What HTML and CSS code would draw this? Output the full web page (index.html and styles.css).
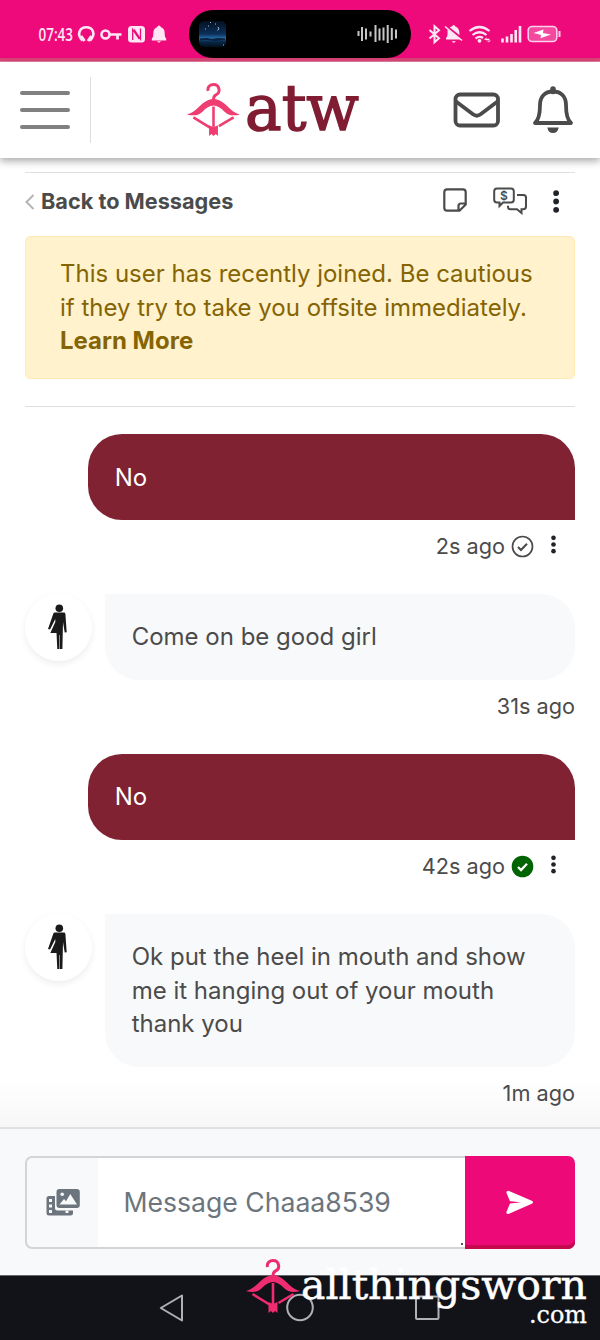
FILE: index.html
```html
<!DOCTYPE html>
<html lang="en">
<head>
<meta charset="utf-8">
<title>Messages</title>
<link rel="stylesheet" href="styles.css">
</head>
<body>
<svg class="defs" width="0" height="0">
  <symbol id="hanger" viewBox="0 0 54 56">
    <path d="M21.500 10C20.500 5.500 24 3.500 27 3.500c6.500 0 7.500 8.500 2.500 10.500-2 .8-2.500 2-2.500 5" fill="none" stroke="currentColor" stroke-width="3"/>
    <path d="M0 34C12 31 14 19.500 27 18c13 1.500 15 13 27 16-7 2-12 1-16-3-3.500-3.500-7-6-11-6S19.500 27.500 16 31c-4 4-9 5-16 3z" fill="currentColor"/>
    <path d="M27 26v21M6.500 37l17 10.500M47.500 37l-15 9" fill="none" stroke="currentColor" stroke-width="2.600"/>
    <path d="M22.500 45l4.500 2 4.500-2v11l-2.300-2-2.200 2-2.200-2-2.300 2z" fill="currentColor"/>
  </symbol>
  <symbol id="person" viewBox="0 0 20 46">
    <circle cx="11.300" cy="4.200" r="3.800"/>
    <path d="M6.800 8.600h9.200q1.200 0 1.400 1.400l1.300 18.200-2 .2L15 18l-.6 27h-2.600V31h-.5v14H9.300L8.500 29H2.300l5-11v-3L2 25.600 0 25 5.300 9.800q.4-1.200 1.500-1.200z"/>
  </symbol>
  <symbol id="dots" viewBox="0 0 6 22">
    <circle cx="3" cy="3" r="2.800"/><circle cx="3" cy="11" r="2.800"/><circle cx="3" cy="19" r="2.800"/>
  </symbol>
</svg>

<div class="status">
  <svg class="status-icons" width="600" height="62" viewBox="0 0 600 62">
    <text class="clock" x="38.500" y="41" textLength="34.500" lengthAdjust="spacingAndGlyphs">07:43</text>
    <g fill="none" stroke="#ffe6f4" stroke-width="2.600">
      <path d="M82.500 40.500C76 34 80 27.300 86.300 27.300S96.500 34 90 40.500"/>
      <path d="M81 36l3.500 5M91.500 36L88 41" stroke-width="3"/>
      <circle cx="105.500" cy="34.500" r="4"/><path d="M110 34.500h11.500M117.500 34.500v5" stroke-width="2.700"/>
    </g>
    <rect x="128" y="26" width="17" height="16.500" rx="3.500" fill="#ffe6f4"/>
    <path d="M132.700 40V29.500l6.500 9.500M140.500 28.500V39l-6.300-9.500" fill="none" stroke="#ef0a7b" stroke-width="1.300"/>
    <path d="M159 25.500q1.500 0 1.700 1.600 4 1.300 4 6.400 0 4 1.500 5v2h-14.400v-2q1.500-1 1.500-5 0-5.100 4-6.400.2-1.600 1.700-1.600zM156.800 41.200h4.400l-2.200 1.500z" fill="#ffe6f4"/>
    <rect x="189" y="10" width="222" height="48" rx="24" fill="#000"/>
    <linearGradient id="night" x2="0" y2="1"><stop offset="0" stop-color="#04101f"/><stop offset=".5" stop-color="#0c2f59"/><stop offset=".66" stop-color="#256aa5"/><stop offset=".8" stop-color="#082749"/><stop offset="1" stop-color="#02101d"/></linearGradient>
    <rect x="199" y="21" width="27" height="26" rx="5" fill="url(#night)"/>
    <path d="M218 27q2 2-.5 3.500M210 22.500h1M208 26h1M215 24h1M223 45h1M205 29h1" stroke="#9cbfe0" fill="none"/>
    <path d="M200 38.500l7-.5 5 1 6-1 7 .5v1.500l-10 1-9-1-6 .5z" fill="#0b213c"/>
    <path d="M358.500 31v5M362 27v14M366 28.500v11M370.500 31.500v5M375.500 25v17M379.500 28.500v12M383.500 27.500v13M387.700 25v18M391.800 28v12M396 29.500v9" stroke="#c7c7c7" stroke-width="2"/>
    <g fill="none" stroke="#ffe6f4">
      <path d="M429.500 30l9.500 8.200-4.500 4v-16l4.500 4-9.500 8.300" stroke-width="2"/>
      <path d="M445 26.500l17 14" stroke-width="1.500"/>
    </g>
    <path d="M449.800 27.500q1.300-.8 2.200-1 .5-1.500 1.700-1.500t1.700 1.500q4 1.500 4 7v1.500zM447.500 29l13 10.500h-14.500v-1.500q1.600-1 1.600-5zM451.500 41.300h4.500l-2.200 1.700z" fill="#ffe6f4"/>
    <g fill="none" stroke="#ffe6f4" stroke-width="2.200">
      <path d="M469.500 31q10-8 20 0M472.500 35q7-5.500 14 0M475.500 38.500q4-3 7.500-.5"/>
    </g>
    <circle cx="479.500" cy="40.800" r="1.900" fill="#ffe6f4"/>
    <path d="M484 39.500l2.500-2v1.200h3v1.600h-3M491 40.500l-2.500 2v-1.200h-3" fill="#ffe6f4"/>
    <path d="M502.500 42.500v-4M507 42.500v-6M511.500 42.500V34M515.700 42.500V30M520 42.500V26" stroke="#ffe6f4" stroke-width="2.600"/>
    <rect x="528.200" y="26.500" width="28.600" height="15" rx="4" fill="#f5489f" stroke="#ffd0e9" stroke-width="1.600"/>
    <path d="M559.500 31v6" stroke="#ffd0e9" stroke-width="2"/>
    <path d="M543.500 29.500l-10 3.500 7.500 2-.5 3.300 10.500-3.800-8-1.500z" fill="#fff"/>
  </svg>
</div>

<header class="header">
  <button class="menu" aria-label="Menu"><i></i><i></i><i></i></button>
  <svg class="brand" width="172" height="80" viewBox="0 -10 172 80">
    <use href="#hanger" x="-1" y="1" width="53" height="55"/>
    <text class="brand-text" x="57" y="49.500" textLength="114" lengthAdjust="spacingAndGlyphs">atw</text>
  </svg>
  <svg class="mail" width="48" height="36" viewBox="0 0 48 36"><rect x="2.500" y="2.500" width="42.500" height="31" rx="4.500"/><path d="M3 9.500l17 12.800q3.800 2.800 7.600 0L44.500 9.500"/></svg>
  <svg class="bell" width="42" height="48" viewBox="0 0 42 48"><path d="M21 5.500c8.500 0 13 5.500 13 13.500 0 9 1 14.500 5 18H3c4-3.500 5-9 5-18C8 11 12.500 5.500 21 5.500z"/><path d="M21 3v2.500" stroke-width="5.500"/><path d="M15.300 41.500h11.400q-1 5.500-5.700 5.500t-5.700-5.500z" fill="#4b4b4b" stroke="none"/></svg>
</header>

<main class="thread">
  <nav class="toolbar">
    <svg class="chevron" width="10" height="16" viewBox="0 0 10 16"><path d="M8.500 1L1.500 8l7 7"/></svg>
    <a class="back">Back to Messages</a>
    <svg class="note" width="24" height="24" viewBox="0 0 24 24"><path d="M4 1.300h16q2.700 0 2.700 2.700v12.500l-6.200 6.200H4q-2.700 0-2.700-2.700V4q0-2.700 2.700-2.700zM22.700 15.500h-4.700q-2.500 0-2.500 2.500v4.700"/></svg>
    <svg class="tips" width="35" height="28" viewBox="0 0 35 28"><path d="M4 1.500h14q2.800 0 2.800 2.800v8.400q0 2.800-2.800 2.800H10L6.500 19v-3.500H4q-2.800 0-2.800-2.800V4.300Q1.200 1.500 4 1.500zM24 8h6.500q2.500 0 2.500 2.500v9q0 2.800-2.800 2.800H28.500V26L24 22.300h-6.500q-2.500 0-2.500-2.500v-1"/><text x="11" y="12.800" text-anchor="middle">$</text></svg>
    <svg class="more" width="6.300" height="23"><use href="#dots" width="6.300" height="23"/></svg>
  </nav>

  <div class="alert">This user has recently joined. Be cautious<br>if they try to take you offsite immediately.<br><b>Learn More</b></div>

  <section class="messages">
    <article class="message sent">
      <div class="bubble">No</div>
      <div class="meta">2s ago
        <svg class="check" width="23" height="23" viewBox="0 0 23 23"><circle cx="11.500" cy="11.500" r="10" fill="none" stroke="#4b4b4b" stroke-width="1.700"/><path d="M7 12l3 3 6-6.200" fill="none" stroke="#4b4b4b" stroke-width="2"/></svg>
        <svg class="dots" width="5" height="19"><use href="#dots" width="5" height="19"/></svg>
      </div>
    </article>
    <article class="message received">
      <div class="avatar"><svg width="20" height="46"><use href="#person" width="20" height="46"/></svg></div>
      <div class="bubble">Come on be good girl</div>
      <div class="meta">31s ago</div>
    </article>
    <article class="message sent">
      <div class="bubble">No</div>
      <div class="meta">42s ago
        <svg class="check" width="23" height="23" viewBox="0 0 23 23"><circle cx="11.500" cy="11.500" r="10.800" fill="#006400"/><path d="M7 12l3 3 6-6.200" fill="none" stroke="#fff" stroke-width="2.300"/></svg>
        <svg class="dots" width="5" height="19"><use href="#dots" width="5" height="19"/></svg>
      </div>
    </article>
    <article class="message received">
      <div class="avatar"><svg width="20" height="46"><use href="#person" width="20" height="46"/></svg></div>
      <div class="bubble">Ok put the heel in mouth and show<br>me it hanging out of your mouth<br>thank you</div>
      <div class="meta">1m ago</div>
    </article>
  </section>
</main>

<footer class="composer">
  <div class="field">
    <div class="attach"><svg width="34" height="28" viewBox="0 0 34 28"><path d="M3 7h6v12q0 2.500 2.500 2.500H27V24q0 2.500-2.500 2.500H3Q.5 26.500.5 24V9.500Q.5 7 3 7z"/><path d="M3 10h3v3H3zM3 15.500h3v3H3zM3 21h3v3H3zM19.500 21.500h3v2.500h-3z" fill="#f8f9fb"/><rect x="10.500" y="0" width="23.300" height="19" rx="3"/><circle cx="16.200" cy="5.200" r="1.800" fill="#f8f9fb"/><path d="M13.500 15.500l4.500-5.500 2 2.300 4.300-7.300 6.700 10.500z" fill="#f8f9fb"/></svg></div>
    <div class="input">Message Chaaa8539<i class="grip"></i></div>
  </div>
  <button class="send" aria-label="Send"><svg width="28" height="25" viewBox="0 0 28 25"><path d="M2.500.8l23.300 10q2.500 1.500 0 3L2.500 24q-2.500.2-2-2.300L4 13.500l11-1.200L4 11.200.5 3Q.2.500 2.500.8z" fill="#fff"/></svg></button>
</footer>

<div class="android-nav">
  <svg width="600" height="64" viewBox="0 1 600 64" fill="none" stroke="#b0b1b4" stroke-width="2">
    <path d="M182 20.500v25L160.800 33z" stroke-linejoin="round"/>
    <circle cx="300" cy="32.500" r="12.800"/>
    <rect x="416" y="21.500" width="22.500" height="22.500" rx="1"/>
  </svg>
  <svg class="watermark" width="354" height="84" viewBox="246 1256 354 84">
    <use href="#hanger" x="246" y="1257" width="54" height="56"/>
    <text class="site" x="301" y="1299" textLength="286" lengthAdjust="spacingAndGlyphs">allthingsworn</text>
    <text class="tld" x="529" y="1322.500" textLength="58" lengthAdjust="spacingAndGlyphs">.com</text>
  </svg>
</div>
</body>
</html>
```

FILE: styles.css
```css
* { box-sizing: border-box; }
body { margin: 0; width: 600px; height: 1340px; overflow: hidden; display: flex; flex-direction: column; background: #fff; color: #4b4b4b; font: 24px/33.33px Inter, sans-serif; }
button { border: 0; padding: 0; background: none; }
svg { display: block; flex: none; }
.defs { position: absolute; }

.status { height: 62px; flex: none; background: linear-gradient(#ef0a7b 58px, #d94273 58px, #dd4a7a 61px, #f4b9ce 62px); }
.clock { font: 600 17.500px "Open Sans", sans-serif; fill: #ffe6f4; }

.header { height: 96px; flex: none; display: flex; align-items: center; background: #fff; box-shadow: 0 3px 8px rgba(0, 0, 0, .35); z-index: 1; }
.menu { width: 91px; height: 66px; padding-left: 20px; border-right: 1px solid #dedede; display: flex; flex-direction: column; justify-content: center; gap: 13px; }
.menu i { width: 50px; height: 3.700px; border-radius: 2px; background: #808080; }
.brand { margin-left: 97px; color: #ef3c71; overflow: visible; }
.brand-text { font: 63px "DejaVu Serif", serif; fill: #801d32; stroke: #801d32; stroke-width: 1.500; }
.mail { margin-left: 92.500px; }
.bell { margin-left: 31.500px; }
.mail, .bell { fill: none; stroke: #4b4b4b; stroke-width: 3.800; stroke-linejoin: round; stroke-linecap: round; }

.thread { flex: none; height: 969px; padding: 14px 25px 0; background: linear-gradient(#fff 920px, #f7f7f7); }
.toolbar { height: 64px; display: flex; align-items: center; padding-bottom: 6px; border-top: 1px solid #dfdfdf; }
.chevron { fill: none; stroke: #b4b4b4; stroke-width: 2; }
.back { margin-left: 6px; font-size: 21.700px; font-weight: 700; width: 402px; }
.note { fill: none; stroke: #4b4b4b; stroke-width: 2.200; margin-top: -3px; }
.tips { margin-left: 26px; fill: none; stroke: #4b4b4b; stroke-width: 2; margin-top: -2px; }
.tips text { font: 600 12px Inter, sans-serif; fill: #4b4b4b; stroke: none; }
.more { margin-left: 25px; fill: #212529; }

.alert { height: 143px; padding: 20.300px 34px; border: 1px solid #ffecb5; border-radius: 5px; background: #fff2cd; color: #856404; }
.messages { margin-top: 27px; padding-top: 27px; border-top: 1px solid #dfdfdf; }
.message { display: grid; grid-template-columns: 63px 1fr; }
.message .bubble { grid-column: 2; padding: 26.500px 26.670px; border-radius: 34px; }
.sent .bubble { background: #802232; color: #fff; border-bottom-right-radius: 0; }
.received { grid-template-columns: 80px 1fr; }
.received .bubble { background: #f8f9fb; border-top-left-radius: 0; }
.avatar { width: 67px; height: 67px; border-radius: 50%; background: #fff; box-shadow: 0 3px 7px rgba(0, 0, 0, .07); display: flex; justify-content: center; padding: 10px 1px 0 0; fill: #1a1a1a; }
.meta { grid-column: 1 / -1; height: 73.670px; padding-top: 10px; display: flex; justify-content: flex-end; font-size: 21.700px; }
.check { margin: 5px 0 0 5.500px; }
.dots { margin: 4.500px 19px 0 17.500px; fill: #212529; }

.composer { height: 148px; flex: none; display: flex; padding: 27px 25px 26px; border-top: 2px solid #dfe1e5; background: #f8f9fb; }
.field { flex: 1; display: flex; border: 2px solid #d2d4d8; border-right: 0; border-radius: 7px 0 0 7px; overflow: hidden; }
.attach { width: 71px; display: flex; align-items: center; justify-content: center; fill: #6c757d; }
.input { flex: 1; display: flex; align-items: center; position: relative; padding-left: 25.500px; background: #fff; color: #6c757d; font-size: 26.600px; }
.grip { position: absolute; right: 2px; bottom: 2px; width: 2px; height: 2px; background: #555; }
.send { width: 110px; display: flex; align-items: center; justify-content: center; border-radius: 0 7px 7px 0; background: #ee0979; box-shadow: inset 0 -4px #c5094f; }

.android-nav { position: relative; height: 65px; flex: none; background: #121318; border-top: 1px solid #66676b; }
.watermark { position: absolute; right: 0; bottom: 0; color: #ef2c6f; fill: #fff; }
.site { font: 41px "DejaVu Serif", serif; stroke: #fff; stroke-width: .5; }
.tld { font: 25px "DejaVu Serif", serif; stroke: #fff; stroke-width: .3; }
```
